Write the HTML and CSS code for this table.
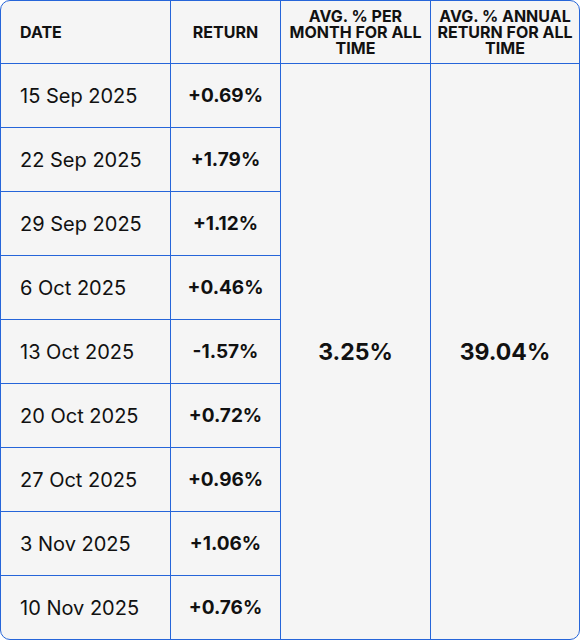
FILE: index.html
```html
<!DOCTYPE html>
<html>
<head>
<meta charset="utf-8">
<link rel="stylesheet" href="styles.css">
</head>
<body>
<div class="card">
  <table class="returns">
    <colgroup>
      <col class="c-date">
      <col class="c-ret">
      <col class="c-month">
      <col class="c-year">
    </colgroup>
    <thead>
      <tr>
        <th class="left">DATE</th>
        <th>RETURN</th>
        <th>AVG. % PER MONTH FOR ALL TIME</th>
        <th class="last">AVG. % ANNUAL RETURN FOR ALL TIME</th>
      </tr>
    </thead>
    <tbody>
      <tr>
        <td class="date">15 Sep 2025</td>
        <td class="ret">+0.69%</td>
        <td class="avg" rowspan="9">3.25%</td>
        <td class="avg last" rowspan="9">39.04%</td>
      </tr>
      <tr><td class="date">22 Sep 2025</td><td class="ret">+1.79%</td></tr>
      <tr><td class="date">29 Sep 2025</td><td class="ret">+1.12%</td></tr>
      <tr><td class="date">6 Oct 2025</td><td class="ret">+0.46%</td></tr>
      <tr><td class="date">13 Oct 2025</td><td class="ret">-1.57%</td></tr>
      <tr><td class="date">20 Oct 2025</td><td class="ret">+0.72%</td></tr>
      <tr><td class="date">27 Oct 2025</td><td class="ret">+0.96%</td></tr>
      <tr><td class="date">3 Nov 2025</td><td class="ret">+1.06%</td></tr>
      <tr class="final"><td class="date">10 Nov 2025</td><td class="ret">+0.76%</td></tr>
    </tbody>
  </table>
</div>
</body>
</html>
```

FILE: styles.css
```css
html, body {
  margin: 0;
  padding: 0;
  background: #ffffff;
}

body {
  font-family: Inter, "Noto Sans", sans-serif;
  color: #111111;
}

.card {
  width: 580px;
  height: 640px;
  box-sizing: border-box;
  border: 1px solid #2665d9;
  border-radius: 10px;
  overflow: hidden;
  background: #f5f5f5;
}

.returns {
  border-collapse: separate;
  border-spacing: 0;
  width: 578px;
  table-layout: fixed;
}

.c-date { width: 170px; }
.c-ret { width: 110px; }
.c-month { width: 150px; }
.c-year { width: 148px; }

.returns th,
.returns td {
  border-right: 1px solid #2665d9;
  border-bottom: 1px solid #2665d9;
  padding: 0;
  text-align: center;
  vertical-align: middle;
}

.returns .last {
  border-right: none;
}

.returns tbody tr.final td {
  border-bottom: none;
}

.returns th {
  height: 62px;
  font-size: 16px;
  line-height: 16px;
  font-weight: 700;
  padding: 0 3px;
}

.returns th.left {
  text-align: left;
  padding-left: 19px;
}

.returns td {
  height: 63px;
  font-size: 20px;
}

.returns td.date {
  text-align: left;
  padding-left: 19px;
  font-weight: 400;
}

.returns td.ret {
  font-size: 19px;
  font-weight: 700;
}

.returns td.avg {
  font-size: 23px;
  font-weight: 700;
  border-bottom: none;
}
```
